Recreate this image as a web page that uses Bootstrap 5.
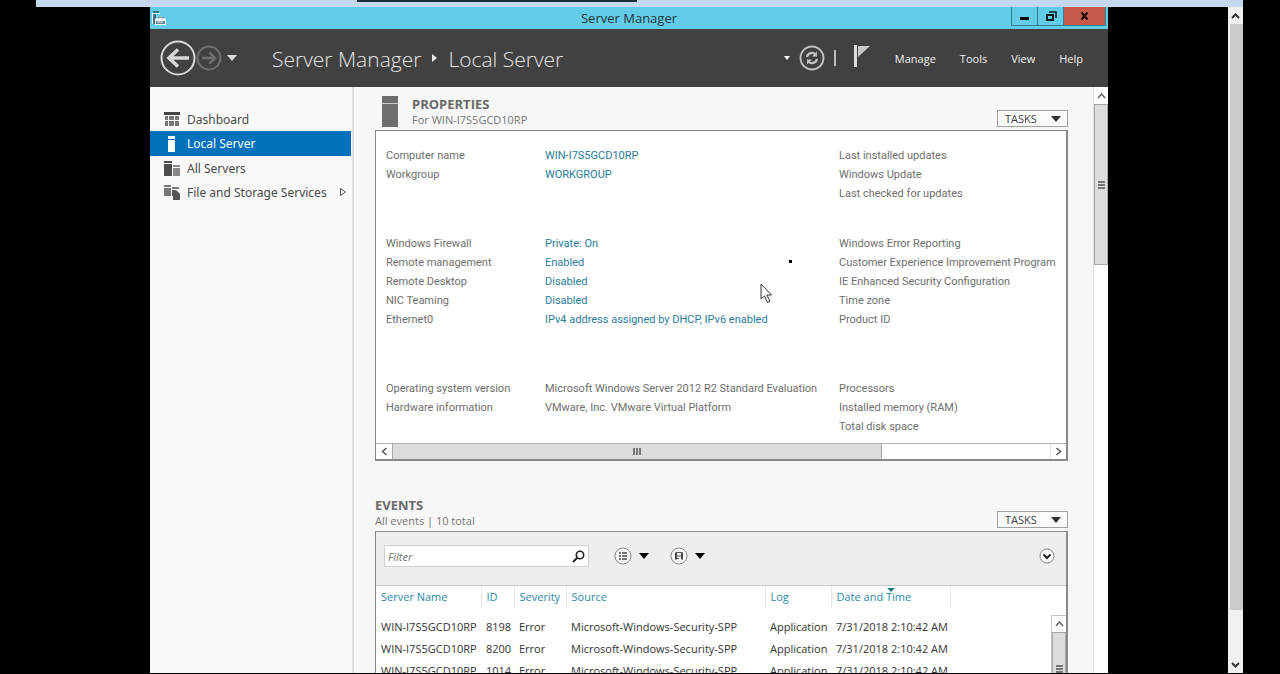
<!DOCTYPE html>
<html lang="en">
<head>
<meta charset="utf-8">
<meta name="viewport" content="width=device-width, initial-scale=1">
<title>Server Manager</title>
<link href="https://cdn.jsdelivr.net/npm/bootstrap@5.3.0/dist/css/bootstrap.min.css" rel="stylesheet">
<style>
  body { background: #000; font-family: "Open Sans", "Noto Sans", sans-serif; font-size: 11px; line-height: 19px; color: #6e6e6e; }
  button { font: inherit; color: inherit; padding: 0; border: 0; background: none; }
  svg { display: block; flex: none; }
  a { color: #2a7c9c; text-decoration: none; }

  .remote { height: 100vh; margin: 0 37px 0 36px; padding-bottom: 1px; }
  .remote-bar { height: 7px; background: #c5d8ee; }
  .remote-tab { width: 280px; height: 2px; margin-left: 321px; background: #1c2b3a; }
  .desktop { padding: 0 120px 0 114px; }
  .remote-scroll { width: 15px; background: #f0f0f0; }
  .remote-scroll .thumb { flex: 0 1 586px; margin-left: 2px; background: #cbcbcb; }
  .remote-scroll button { height: 17px; }

  .titlebar { height: 22px; background: #63cde8; color: #1d3540; font-size: 13px; }
  .titlebar .app-icon { margin-left: 2px; }
  .titlebar .win-title { line-height: 22px; padding-right: 17px; }
  .win-buttons { height: 19px; margin-right: 2px; border: 1px solid #2f7f96; border-top: 0; }
  .win-buttons button { width: 26px; border-right: 1px solid #2f7f96; }
  .win-buttons button:last-child { width: 41px; border: 0; background: #c65a4c; }

  .topbar { height: 58px; background: #414141; color: #f0f0f0; padding: 0 25px 0 10px; }
  .crumbs { font-size: 21px; font-weight: 300; line-height: 28px; margin-left: 34px; padding-top: 2px; gap: 10px; color: #e4e4e4; }
  .menu { gap: 24px; margin-left: 24px; }

  .sidebar { width: 204px; padding-top: 20px; border-right: 2px solid #dedede; background: #f9f9f9; font-family: "Noto Sans", sans-serif; font-size: 12px; }
  .sidebar a { height: 24px; margin-right: 1px; padding: 0 4px 0 14px; gap: 7px; color: #4a4a4a; }
  .sidebar a.active { background: #0072bc; color: #fff; height: 25px; }

  .main { background: #f7f7f7; padding: 9px 25px 0 21px; }
  .server-icon { margin-left: 7px; margin-right: 14px; }
  .section-title { font-size: 13px; font-weight: 700; line-height: 16px; margin: 0; color: #6a6a6a; }
  .section-sub { line-height: 16px; padding-bottom: 2px; color: #777; }
  .tasks { width: 71px; height: 17px; margin-bottom: 3px; padding: 0 6px 0 7px; border: 1px solid #a0a0a0; background: #fafafa; color: #444; line-height: 15px; }

  .panel { border: 1px solid #8a8a8a; border-right-width: 2px; background: #fff; }
  .panel.props { border-bottom-width: 2px; }
  .props-body { padding: 15px 0 7px 10px; font-family: Roboto, sans-serif; }
  .props-grid { display: grid; grid-template-columns: 159px 294px 1fr; grid-auto-rows: 19px; white-space: nowrap; }
  .g2 { margin-top: 31px; } .g3 { margin-top: 50px; }
  .dot { left: 413px; top: 129px; width: 3px; height: 3px; background: #000; }
  .pointer { left: 384px; top: 152px; }

  .hscroll { height: 16px; border-top: 1px solid #b0b0b0; }
  .hscroll button { width: 16px; }
  .hscroll .thumb { flex: 0 0 71%; background: #dcdcdc; border: solid #a8a8a8; border-width: 0 1px; }
  .vscroll { width: 15px; background: #fff; }
  .vscroll button { height: 16px; }
  .vscroll .thumb { background: #dcdcdc; border: 1px solid #a8a8a8; }
  .win-scroll { border-left: 1px solid #dedede; padding-top: 1px; }
  .win-scroll .thumb { flex: 0 0 161px; }

  .events { margin-top: 36px; }
  .toolbar { height: 54px; background: #eee; border-bottom: 1px solid #c8c8c8; padding: 0 11px 5px 8px; }
  .filter { width: 205px; height: 22px; border: 1px solid #d0d0d0; background: #fff; padding: 0 3px; }
  .filter input { border: 0; outline: 0; width: 100%; padding: 0; font: inherit; font-style: italic; background: none; }
  .filter input::placeholder { color: #777; opacity: 1; }
  .toolbar .query { margin-left: 25px; gap: 7px; }
  .toolbar .query + .query { margin-left: 21px; }
  .grid { table-layout: fixed; width: 574px; color: #333; line-height: 22px; white-space: nowrap; }
  .grid th { font-weight: 400; color: #2a88ad; padding: 0 0 0 5px; border-right: 1px solid #e6e6e6; }
  .grid td { padding: 0 0 0 5px; }
  .grid tbody::before { content: ""; display: block; height: 8px; }
  .sort-mark { top: 2px; left: 55px; }
  .event-scroll { margin-top: 29px; border: 1px solid #c4c4c4; border-width: 1px 0 0 1px; }
</style>
</head>
<body>
<div class="remote d-flex flex-column overflow-hidden">
  <div class="remote-bar flex-shrink-0"><div class="remote-tab"></div></div>
  <div class="d-flex flex-grow-1 overflow-hidden">
    <div class="desktop d-flex flex-grow-1 overflow-hidden">
      <div class="d-flex flex-column flex-grow-1 overflow-hidden">

        <header class="titlebar d-flex flex-shrink-0 position-relative">
          <svg class="app-icon mt-1" width="15" height="15" viewBox="0 0 15 15"><path d="M1 0h6v2H1z" fill="#2f6f88"/><path d="M0 2h8v1H0z" fill="#fff"/><path d="M1 3h3v10H1z" fill="#4a7486"/><path d="M0 3h1v10H0z" fill="#fff"/><path d="M3 8l6-3 5 3v6H3z" fill="#eef3f5"/><path d="M6 7l3-1 3 1" fill="none" stroke="#5b7682"/><path d="M4 10h9v3H4z" fill="#6b8590"/><path d="M6 10v2M8 10v2M10 10v2" stroke="#eef3f5"/></svg>
          <div class="win-title flex-grow-1 text-center">Server Manager</div>
          <div class="win-buttons d-flex position-absolute top-0 end-0">
            <button type="button" aria-label="Minimize"><svg class="mx-auto" width="12" height="12"><path d="M1 7h9v3H1z"/></svg></button>
            <button type="button" aria-label="Restore"><svg class="mx-auto" width="12" height="12" fill="none" stroke="#0b1c22" stroke-width="2"><path d="M2 5h6v5H2z"/><path d="M4 2h7v6" stroke-width="1.5"/></svg></button>
            <button type="button" aria-label="Close"><svg class="mx-auto" width="10" height="10" stroke="#1d0b08" stroke-width="2"><path d="M1.500 1.500l6 7M7.500 1.500l-6 7"/></svg></button>
          </div>
        </header>

        <nav class="topbar d-flex align-items-center flex-shrink-0 text-nowrap">
          <button type="button" aria-label="Back"><svg width="36" height="36" fill="none" stroke="#d8d8d8"><circle cx="18" cy="18" r="16.500" stroke-width="2"/><path d="M29 18H9M18 9.500L9 18l9 8.500" stroke-width="3.500"/></svg></button>
          <button type="button" aria-label="Forward"><svg width="26" height="26" fill="none" stroke="#707070"><circle cx="13" cy="13" r="11.500" stroke-width="2"/><path d="M6 13h13M13.500 7.500L19 13l-5.500 5.500" stroke-width="2.500"/></svg></button>
          <button type="button" aria-label="History" class="ms-1"><svg width="12" height="8"><path d="M1 1h10L6 7z" fill="#ddd"/></svg></button>
          <div class="crumbs d-flex align-items-center">
            <span>Server Manager</span><svg width="7" height="10"><path d="M1 0l5 4-5 4z" fill="#eee"/></svg><span>Local Server</span>
          </div>
          <div class="ms-auto d-flex align-items-center">
            <button type="button" aria-label="Notifications list" class="me-2"><svg width="8" height="6"><path d="M1 1h6L4 5z" fill="#fff"/></svg></button>
            <button type="button" aria-label="Refresh"><svg width="26" height="26" fill="none" stroke="#c4c4c4"><circle cx="13" cy="13" r="11.500" stroke-width="1.800"/><path d="M8 12a5 5 0 0 1 8.500-2.500M18 14a5 5 0 0 1-8.500 2.500" stroke-width="2.200"/><path d="M18 6.500v5h-5zM8 19.500v-5h5z" fill="#c4c4c4" stroke="none"/></svg></button>
            <svg width="20" height="18"><path d="M10 1v16" stroke="#bbb" stroke-width="2"/></svg>
            <button type="button" aria-label="Flag" class="ms-2 mb-1"><svg width="18" height="24"><path d="M1 1h3v22H1z" fill="#ddd"/><path d="M5 2h12L5 13z" fill="#c8c8c8"/></svg></button>
          </div>
          <div class="menu d-flex">
            <button type="button">Manage</button><button type="button">Tools</button><button type="button">View</button><button type="button">Help</button>
          </div>
        </nav>

        <div class="d-flex flex-grow-1 overflow-hidden">
          <nav class="sidebar flex-shrink-0 text-nowrap">
            <a href="#" class="d-flex align-items-center"><svg width="16" height="15" fill="#777"><path d="M0 0h16v3H0z" fill="#444"/><path d="M1 4h3v4H1zM5 4h5v4H5zM11 4h4v4h-4zM1 9h3v5H1zM5 9h5v5H5zM11 9h4v5h-4z"/></svg>Dashboard</a>
            <a href="#" class="d-flex align-items-center active"><svg width="16" height="16" fill="#fff"><path d="M4 0h7v3H4zM4 4h7v12H4z"/></svg>Local Server</a>
            <a href="#" class="d-flex align-items-center"><svg width="16" height="15" fill="#4d4d4d"><path d="M0 0h8v2H0zM0 3h8v12H0z"/><path d="M9 4h7v2H9zM9 7h7v8H9z" fill="#888"/></svg>All Servers</a>
            <a href="#" class="d-flex align-items-center"><svg width="16" height="16" fill="#777"><path d="M0 1h7v2H0zM0 4h7v8H0zM8 3h7v2H8z"/><path d="M8 6h4l4 4v6H9v-4H8z" fill="#555"/></svg>File and Storage Services<svg class="ms-auto" width="8" height="10" fill="none" stroke="#555"><path d="M1.500 1.500l5 3.500-5 3.500z"/></svg></a>
          </nav>

          <main class="main flex-grow-1 overflow-hidden">
            <section>
              <div class="d-flex">
                <svg class="server-icon" width="16" height="31"><path d="M0 0h16v31H0z" fill="#6e6e6e"/><path d="M0 7.500h16" stroke="#c8c8c8"/></svg>
                <div class="flex-grow-1">
                  <h2 class="section-title">PROPERTIES</h2>
                  <div class="section-sub">For WIN-I7S5GCD10RP</div>
                </div>
                <button type="button" class="tasks d-flex align-items-center justify-content-between align-self-end">TASKS<svg width="10" height="6"><path d="M0 0h10L5 6z" fill="#333"/></svg></button>
              </div>
              <div class="panel props">
                <div class="props-body position-relative">
                  <div class="props-grid">
                    <span>Computer name</span><a href="#">WIN-I7S5GCD10RP</a><span>Last installed updates</span>
                    <span>Workgroup</span><a href="#">WORKGROUP</a><span>Windows Update</span>
                    <span></span><span></span><span>Last checked for updates</span>
                  </div>
                  <div class="props-grid g2">
                    <span>Windows Firewall</span><a href="#">Private: On</a><span>Windows Error Reporting</span>
                    <span>Remote management</span><a href="#">Enabled</a><span>Customer Experience Improvement Program</span>
                    <span>Remote Desktop</span><a href="#">Disabled</a><span>IE Enhanced Security Configuration</span>
                    <span>NIC Teaming</span><a href="#">Disabled</a><span>Time zone</span>
                    <span>Ethernet0</span><a href="#">IPv4 address assigned by DHCP, IPv6 enabled</a><span>Product ID</span>
                  </div>
                  <div class="props-grid g3">
                    <span>Operating system version</span><span>Microsoft Windows Server 2012 R2 Standard Evaluation</span><span>Processors</span>
                    <span>Hardware information</span><span>VMware, Inc. VMware Virtual Platform</span><span>Installed memory (RAM)</span>
                    <span></span><span></span><span>Total disk space</span>
                  </div>
                  <span class="dot position-absolute"></span>
                  <svg class="pointer position-absolute" width="13" height="21"><path d="M1 1v15l3.500-3 3 6.500 2.500-1-3-6.500h4.500z" fill="#fff" stroke="#333"/></svg>
                </div>
                <div class="hscroll d-flex">
                  <button type="button" aria-label="Scroll left"><svg class="mx-auto" width="7" height="9" fill="none" stroke="#555" stroke-width="1.500"><path d="M5.500 1l-4 3.500 4 3.500"/></svg></button>
                  <div class="thumb d-flex align-items-center justify-content-center"><svg width="8" height="7"><path d="M1 0v7M4 0v7M7 0v7" stroke="#777" stroke-width="2"/></svg></div>
                  <button type="button" aria-label="Scroll right" class="ms-auto border-start"><svg class="mx-auto" width="7" height="9" fill="none" stroke="#555" stroke-width="1.500"><path d="M1.500 1l4 3.500-4 3.500"/></svg></button>
                </div>
              </div>
            </section>

            <section class="events">
              <div class="d-flex">
                <div class="flex-grow-1">
                  <h2 class="section-title">EVENTS</h2>
                  <div class="section-sub">All events | 10 total</div>
                </div>
                <button type="button" class="tasks d-flex align-items-center justify-content-between align-self-end">TASKS<svg width="10" height="6"><path d="M0 0h10L5 6z" fill="#333"/></svg></button>
              </div>
              <div class="panel">
                <div class="toolbar d-flex align-items-center">
                  <div class="filter d-flex align-items-center">
                    <input type="text" placeholder="Filter" aria-label="Filter">
                    <svg width="13" height="13" fill="none" stroke="#222"><circle cx="8" cy="5" r="3.700" stroke-width="1.600"/><path d="M5.500 7.500L1 12" stroke-width="2"/></svg>
                  </div>
                  <button type="button" aria-label="Search criteria" class="query d-flex align-items-center"><svg width="18" height="18"><circle cx="9" cy="9" r="8" fill="#f8f8f8" stroke="#888"/><path d="M5 6h2M5 9h2M5 12h2M8 6h5M8 9h5M8 12h5" stroke="#444" stroke-width="1.400"/></svg><svg width="10" height="6"><path d="M0 0h10L5 6z"/></svg></button>
                  <button type="button" aria-label="Saved queries" class="query d-flex align-items-center"><svg width="18" height="18"><circle cx="9" cy="9" r="8" fill="#f8f8f8" stroke="#888"/><path d="M6 5.500v7M12 5.500v7" stroke="#444" stroke-width="2"/><path d="M6 5.500h6M6 9h6M7 11.500h2" stroke="#555"/></svg><svg width="10" height="6"><path d="M0 0h10L5 6z"/></svg></button>
                  <button type="button" aria-label="Expand" class="ms-auto"><svg width="16" height="16"><circle cx="8" cy="8" r="7" fill="#fafafa" stroke="#888"/><path d="M4.500 6.500L8 10l3.500-3.500" fill="none" stroke="#222" stroke-width="2"/></svg></button>
                </div>
                <div class="d-flex justify-content-between align-items-stretch">
                  <table class="grid">
                    <colgroup><col style="width:105px"><col style="width:33px"><col style="width:52px"><col style="width:199px"><col style="width:66px"><col style="width:119px"></colgroup>
                    <thead><tr><th>Server Name</th><th>ID</th><th>Severity</th><th>Source</th><th>Log</th><th class="position-relative">Date and Time<svg class="sort-mark position-absolute" width="8" height="4"><path d="M0 0h8L4 4z" fill="#1d7a80"/></svg></th></tr></thead>
                    <tbody>
                      <tr><td>WIN-I7S5GCD10RP</td><td>8198</td><td>Error</td><td>Microsoft-Windows-Security-SPP</td><td>Application</td><td>7/31/2018 2:10:42 AM</td></tr>
                      <tr><td>WIN-I7S5GCD10RP</td><td>8200</td><td>Error</td><td>Microsoft-Windows-Security-SPP</td><td>Application</td><td>7/31/2018 2:10:42 AM</td></tr>
                      <tr><td>WIN-I7S5GCD10RP</td><td>1014</td><td>Error</td><td>Microsoft-Windows-Security-SPP</td><td>Application</td><td>7/31/2018 2:10:42 AM</td></tr>
                    </tbody>
                  </table>
                  <div class="vscroll event-scroll d-flex flex-column">
                    <button type="button" aria-label="Scroll up"><svg class="mx-auto" width="9" height="6" fill="none" stroke="#666" stroke-width="1.500"><path d="M1 5l3.500-4L8 5"/></svg></button>
                    <div class="thumb flex-grow-1 d-flex align-items-end justify-content-center pb-2"><svg width="7" height="8"><path d="M0 1h7M0 4h7M0 7h7" stroke="#555" stroke-width="1.500"/></svg></div>
                  </div>
                </div>
              </div>
            </section>
          </main>

          <div class="vscroll win-scroll flex-shrink-0 d-flex flex-column">
            <button type="button" aria-label="Scroll up"><svg class="mx-auto" width="9" height="6" fill="none" stroke="#666" stroke-width="1.500"><path d="M1 5l3.500-4L8 5"/></svg></button>
            <div class="thumb d-flex align-items-center justify-content-center"><svg width="7" height="8"><path d="M0 1h7M0 4h7M0 7h7" stroke="#555" stroke-width="1.500"/></svg></div>
          </div>
        </div>
      </div>
    </div>

    <div class="remote-scroll flex-shrink-0 d-flex flex-column">
      <button type="button" aria-label="Scroll up"><svg class="mx-auto" width="9" height="6" fill="none" stroke="#333" stroke-width="2"><path d="M1 5l3.500-3.500L8 5"/></svg></button>
      <div class="thumb"></div>
      <button type="button" class="mt-auto" aria-label="Scroll down"><svg class="mx-auto" width="9" height="6" fill="none" stroke="#333" stroke-width="2"><path d="M1 1l3.500 3.500L8 1"/></svg></button>
    </div>
  </div>
</div>
<script src="https://cdn.jsdelivr.net/npm/bootstrap@5.3.0/dist/js/bootstrap.bundle.min.js"></script>
</body>
</html>
